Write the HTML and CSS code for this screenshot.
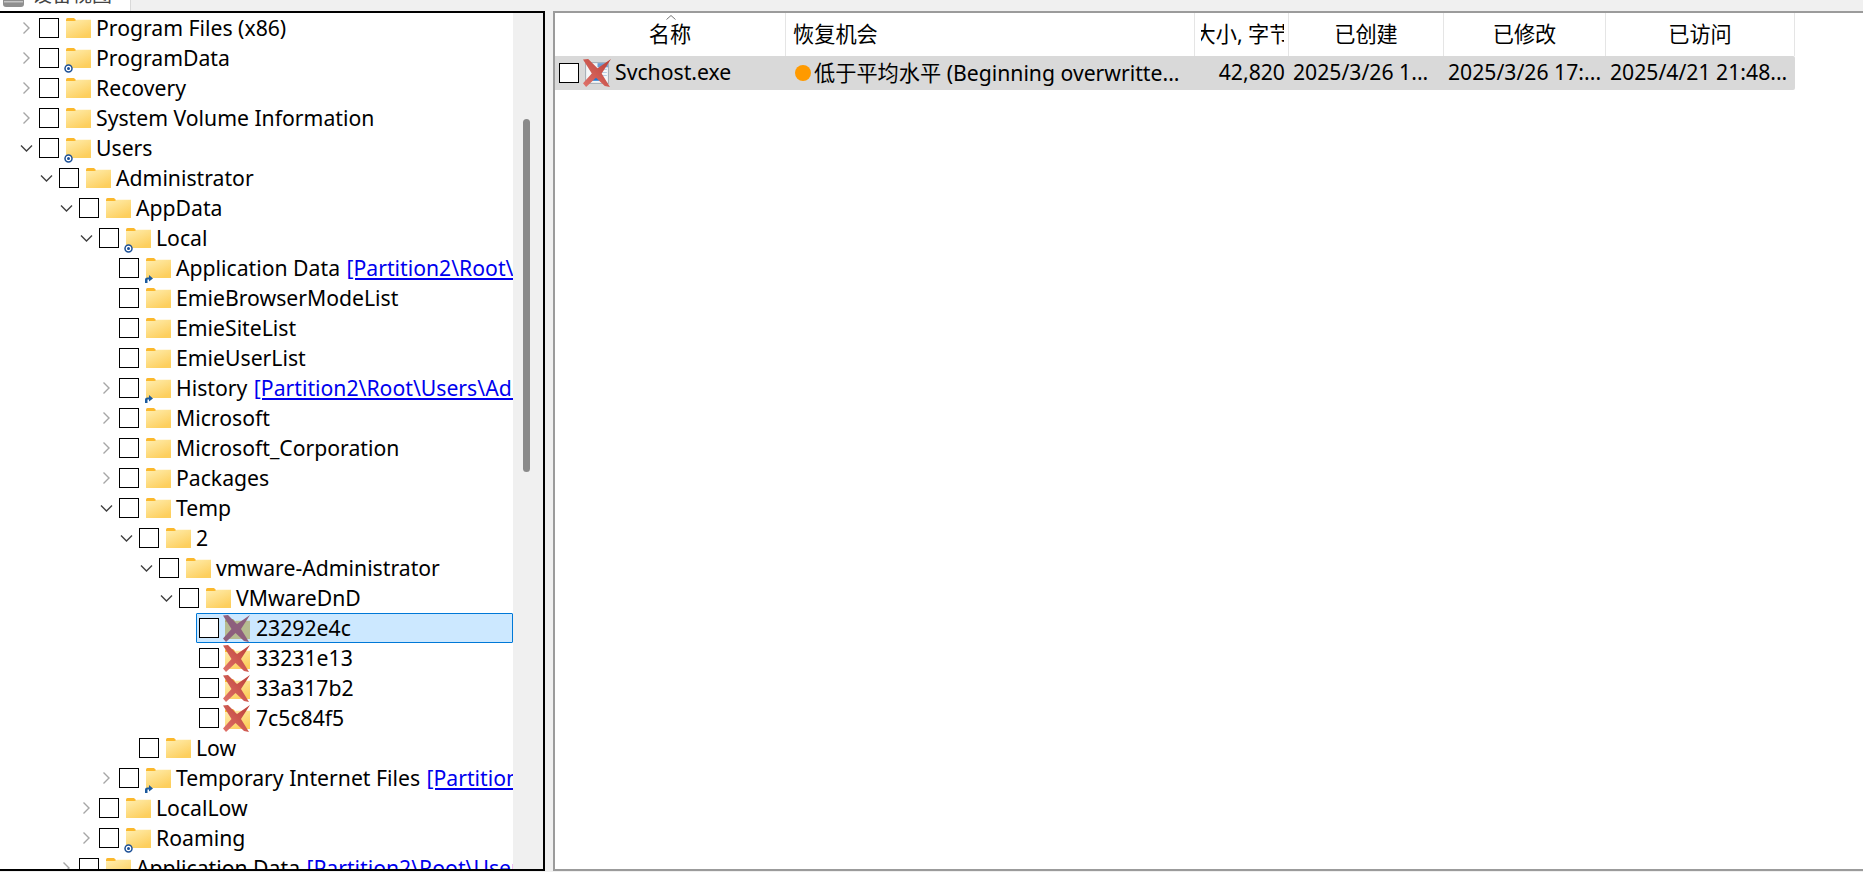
FILE: index.html
```html
<!DOCTYPE html>
<html lang="zh-CN">
<head>
    <meta charset="UTF-8">
    <title>设备视图</title>
    <link rel="stylesheet" href="styles.css">
</head>
<body>
    <svg class="defs" width="0" height="0">
        <defs>
            <linearGradient id="fold" x1="0" y1="0" x2="0.6" y2="1">
                <stop offset="0" stop-color="#ffeeb0"/>
                <stop offset="1" stop-color="#fdcf5e"/>
            </linearGradient>
            <linearGradient id="red" x1="1" y1="0" x2="0" y2="1">
                <stop offset="0" stop-color="#bb3f36"/>
                <stop offset="1" stop-color="#e0736b"/>
            </linearGradient>
            <symbol id="folder" viewBox="0 0 25 20">
                <path d="M0 1.500Q0 0 1.500 0H8L11 3H0Z" style="fill:var(--tab, #fbb82c)"/>
                <path d="M0 3H8.500L11 1.800H25V20H0Z" style="fill:var(--fold, url(#fold))"/>
            </symbol>
            <symbol id="cross" viewBox="0 0 27 27">
                <path d="M0 .5L5 0L14 9L27 0L18 14L26 27L21 26L12.500 18L3 27L0 23.500L8.500 14Z" style="fill:var(--cross, url(#red))"/>
            </symbol>
        </defs>
    </svg>
    <div class="tabbar">
        <div class="tab">
            <svg class="drive" width="21" height="7" viewBox="0 0 21 7"><path d="M0 0H21V4Q21 7 18 7H3Q0 7 0 4Z" fill="#8f8f8f"/><rect x="1" y="1" width="19" height="1.500" fill="#c4c4c4"/></svg>
            <span class="tab-text">设备视图</span>
        </div>
    </div>
    <main class="panes">
        <section class="tree-pane">
            <div class="tree" id="tree"></div>
            <div class="scrollbar"><div class="thumb"></div></div>
        </section>
        <section class="list-pane">
            <div class="list-head">
                <div class="col c-name head-center">名称<svg class="sort" width="10" height="5" viewBox="0 0 10 5"><path d="M.5 4.500L5 .5L9.500 4.500" fill="none" stroke="#777"/></svg></div>
                <div class="col c-chance">恢复机会</div>
                <div class="col c-size"><span class="clip">大小, 字节</span></div>
                <div class="col c-date head-center">已创建</div>
                <div class="col c-date2 head-center">已修改</div>
                <div class="col c-date3 head-center">已访问</div>
            </div>
            <div class="list-row">
                <div class="col c-name">
                    <span class="check"></span>
                    <span class="file-icon">
                        <svg width="28" height="28" viewBox="0 0 27 27">
                            <rect x="2.500" y="3.500" width="22" height="20" fill="#f4f6f8" stroke="#a4adb5"/>
                            <rect x="14" y="4" width="10" height="4" fill="#6d9bd0"/>
                            <path d="M16 10H23M16 13H23M17 16H23" stroke="#b9cde2"/>
                            <path d="M5 21L12 8L17 21Z" fill="#1f78cf"/>
                            <use href="#cross" width="27" height="27"/>
                        </svg>
                    </span>
                    <span class="cell-text">Svchost.exe</span>
                </div>
                <div class="col c-chance"><span class="dot"></span><span class="cell-text">低于平均水平 (Beginning overwritte...</span></div>
                <div class="col c-size right"><span class="cell-text">42,820</span></div>
                <div class="col c-date"><span class="cell-text">2025/3/26 1...</span></div>
                <div class="col c-date2"><span class="cell-text">2025/3/26 17:...</span></div>
                <div class="col c-date3"><span class="cell-text">2025/4/21 21:48...</span></div>
            </div>
        </section>
    </main>
    <script>
        // [indent level, open state, icon badge, label, link text]
        const rows = [
            [0, '>', '', 'Program Files (x86)'],
            [0, '>', 'dot', 'ProgramData'],
            [0, '>', '', 'Recovery'],
            [0, '>', '', 'System Volume Information'],
            [0, 'v', 'dot', 'Users'],
            [1, 'v', '', 'Administrator'],
            [2, 'v', '', 'AppData'],
            [3, 'v', 'dot', 'Local'],
            [4, '', 'link', 'Application Data', '[Partition2\\Root\\Users\\Administrator\\AppData]'],
            [4, '', '', 'EmieBrowserModeList'],
            [4, '', '', 'EmieSiteList'],
            [4, '', '', 'EmieUserList'],
            [4, '>', 'link', 'History', '[Partition2\\Root\\Users\\Administrator\\AppData]'],
            [4, '>', '', 'Microsoft'],
            [4, '>', '', 'Microsoft_Corporation'],
            [4, '>', '', 'Packages'],
            [4, 'v', '', 'Temp'],
            [5, 'v', '', '2'],
            [6, 'v', '', 'vmware-Administrator'],
            [7, 'v', '', 'VMwareDnD'],
            [8, '', 'del', '23292e4c', '', true],
            [8, '', 'del', '33231e13'],
            [8, '', 'del', '33a317b2'],
            [8, '', 'del', '7c5c84f5'],
            [5, '', '', 'Low'],
            [4, '>', 'link', 'Temporary Internet Files', '[Partition2\\Root\\Users\\Administrator]'],
            [3, '>', '', 'LocalLow'],
            [3, '>', 'dot', 'Roaming'],
            [2, '>', 'link', 'Application Data', '[Partition2\\Root\\Users\\Administrator]']
        ];

        const badges = {
            dot: '<svg class="badge" width="9" height="9" viewBox="0 0 9 9"><circle cx="4.500" cy="4.500" r="3.500" fill="#fff" stroke="#1b4f96" stroke-width="1.500"/><circle cx="4.500" cy="4.500" r="1.500" fill="#1b4f96"/></svg>',
            link: '<svg class="badge" width="9" height="9" viewBox="0 0 9 9"><path d="M1 9V5.500Q1 3.500 3.500 3.500H5V1L9 4.500L5 7.500V5.500H3.500V9Z" fill="#1b5a9e"/></svg>'
        };

        const tree = document.getElementById('tree');
        tree.innerHTML = rows.map(([level, state, badge, label, link, selected]) => {
            let arrow = '';
            if (state === '>') arrow = '<svg width="9" height="14" viewBox="0 0 9 14"><path d="M1.500 1.500L7 7L1.500 12.500" fill="none" stroke="#a6a6a6" stroke-width="1.400"/></svg>';
            if (state === 'v') arrow = '<svg width="13" height="9" viewBox="0 0 13 9"><path d="M1 1.500L6.500 7L12 1.500" fill="none" stroke="#404040" stroke-width="1.400"/></svg>';
            const icon = badge === 'del'
                ? '<svg class="folder" width="27" height="27" viewBox="0 0 27 27"><use href="#folder" x="2" y="4" width="25" height="20"/><use href="#cross" width="27" height="27"/></svg>'
                : '<svg class="folder" width="25" height="20"><use href="#folder"/></svg>' + (badges[badge] || '');
            return `<div class="row lv${level}${selected ? ' selected' : ''}${badge === 'del' ? ' deleted' : ''}">
                <span class="arrow">${arrow}</span>
                <span class="check"></span>
                <span class="icon">${icon}</span>
                <span class="label">${label}${link ? ' <a>' + link + '</a>' : ''}</span>
            </div>`;
        }).join('');
    </script>
</body>
</html>
```

FILE: styles.css
```css
* {
    box-sizing: border-box;
}
html, body {
    height: 100%;
}
body {
    margin: 0;
    overflow: hidden;
    background: #fff;
    color: #000;
    font-family: 'Noto Sans', 'Noto Sans CJK SC', sans-serif;
    font-size: 21.2px;
}
.defs {
    display: block;
    height: 0;
}
.tabbar {
    height: 11px;
    background: #f0f0f0;
    overflow: hidden;
}
.tab {
    display: flex;
    align-items: flex-start;
    width: 131px;
    height: 11px;
    background: #fff;
    border-right: 1px solid #d9d9d9;
    padding-left: 3px;
    overflow: hidden;
}
.drive {
    flex: none;
    margin-right: 8px;
}
.tab-text {
    margin-top: -19px;
    line-height: 28px;
    font-size: 20px;
    color: #444;
}
.panes {
    display: flex;
    height: 861px;
    background: #f0f0f0;
}
.tree-pane {
    display: flex;
    width: 545px;
    height: 860px;
    border: 2px solid #000;
    border-left: 0;
    background: #fff;
    overflow: hidden;
}
.tree {
    width: 513px;
    overflow: hidden;
}
.scrollbar {
    width: 30px;
    background: #f0f0f0;
    padding: 106px 0 0 10px;
}
.thumb {
    width: 7px;
    height: 353px;
    border-radius: 4px;
    background: #8a8a8a;
}
.row {
    display: flex;
    align-items: center;
    height: 30px;
    white-space: nowrap;
    overflow: hidden;
    padding-left: 20px;
}
.lv1 { padding-left: 40px; }
.lv2 { padding-left: 60px; }
.lv3 { padding-left: 80px; }
.lv4 { padding-left: 100px; }
.lv5 { padding-left: 120px; }
.lv6 { padding-left: 140px; }
.lv7 { padding-left: 160px; }
.lv8 { padding-left: 180px; }
.arrow {
    display: flex;
    align-items: center;
    justify-content: center;
    flex: none;
    width: 13px;
    margin-right: 6px;
}
.check {
    flex: none;
    display: block;
    width: 20px;
    height: 20px;
    border: 1px solid #000;
    background: #fff;
}
.icon {
    position: relative;
    flex: none;
    display: flex;
    width: 25px;
    margin-left: 7px;
}
.badge {
    position: absolute;
    left: -2px;
    bottom: -5px;
}
.label {
    margin-left: 5px;
    margin-bottom: 2px;
}
.label a {
    margin-left: 1px;
    color: #0000ee;
    text-decoration: underline;
}
.deleted .icon {
    width: 27px;
    margin-left: 4px;
}
.deleted .label {
    margin-left: 6px;
}
.selected {
    margin-left: 196px;
    padding-left: 0;
    background: #cce8ff;
    border: 1px solid #0078d7;
    border-radius: 1px;
}
.selected .arrow {
    display: none;
}
.selected .check {
    margin-left: 2px;
}
.selected .folder {
    --tab: #a9a56a;
    --fold: #b6bb90;
    --cross: #8d5f7d;
}
.list-pane {
    flex: 1;
    height: 860px;
    margin-left: 8px;
    border-top: 2px solid #9b9b9b;
    border-left: 2px solid #9b9b9b;
    border-bottom: 2px solid #9b9b9b;
    background: #fff;
}
.list-head,
.list-row {
    display: flex;
    width: 1240px;
}
.list-head {
    height: 43px;
    line-height: 41px;
}
.list-head .col {
    position: relative;
    border-right: 1px solid #e5e5e5;
    padding: 0 7px;
}
.head-center {
    text-align: center;
}
.sort {
    position: absolute;
    left: 111px;
    top: 2px;
}
.col {
    flex: none;
    overflow: hidden;
    white-space: nowrap;
}
.list-head .c-size {
    padding: 0 4px 0 6px;
}
.clip {
    display: flex;
    justify-content: center;
    overflow: hidden;
}
.c-name { width: 231px; }
.c-chance { width: 409px; }
.c-size { width: 94px; }
.c-date { width: 155px; }
.c-date2 { width: 162px; }
.c-date3 { width: 189px; }
.list-row {
    height: 34px;
    align-items: center;
    background: #d9d9d9;
    border-radius: 0 2px 2px 0;
}
.list-row .col {
    display: flex;
    align-items: center;
    padding: 0 4px;
}
.list-row .c-name {
    padding-left: 4px;
}
.list-row .right {
    justify-content: flex-end;
}
.cell-text {
    margin-bottom: 3px;
}
.file-icon {
    display: flex;
    margin-left: 4px;
    margin-right: 4px;
}
.dot {
    flex: none;
    width: 16px;
    height: 16px;
    margin: 0 3px 0 5px;
    border-radius: 50%;
    background: #ff9a00;
}
```
